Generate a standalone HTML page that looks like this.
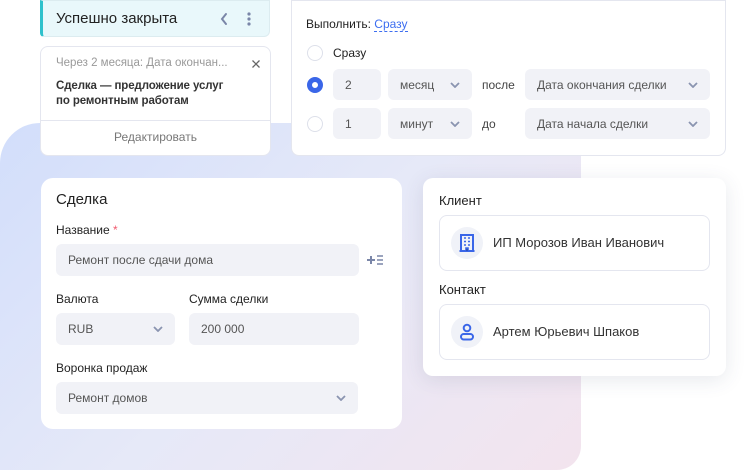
<!DOCTYPE html>
<html><head><meta charset="utf-8"><style>
*{box-sizing:border-box;margin:0;padding:0}
body{width:753px;height:470px;background:#fff;font-family:"Liberation Sans",sans-serif;position:relative;overflow:hidden;color:#222}
.abs{position:absolute}
.bg{left:0;top:123px;width:581px;height:347px;border-radius:40px 0 24px 0;background:linear-gradient(135deg,#d2defb 0%,#e6e9f8 50%,#f3e4ee 100%)}
.card{background:#fff;border:1px solid #e4e6ef;border-radius:8px}
.inp{background:#f1f2f7;border-radius:6px;font-size:12px;color:#555;display:flex;align-items:center;padding-left:12px}
.chev{position:absolute;right:12px;top:50%;margin-top:-3px;width:10px;height:6px}
.lbl{font-size:12px;color:#222}
.radio{width:16px;height:16px;border:1px solid #dde0ea;border-radius:50%;background:#fff}
</style></head><body>
<div class="abs bg"></div>

<div class="abs" style="left:40px;top:0;width:230px;height:37px;background:#e9f8fb;border:1px solid #dcecf0;border-left:3px solid #2fc1cc;border-radius:0 0 6px 4px"></div>
<div class="abs" style="left:56px;top:10px;font-size:15px;color:#222">Успешно закрыта</div>
<svg class="abs" style="left:219px;top:12px" width="10" height="14"><path d="M7 2 L3 7 L7 12" stroke="#7a86a8" stroke-width="2" fill="none" stroke-linecap="round"/></svg>
<svg class="abs" style="left:246px;top:11px" width="6" height="16"><circle cx="3" cy="3" r="1.6" fill="#7a86a8"/><circle cx="3" cy="8" r="1.6" fill="#7a86a8"/><circle cx="3" cy="13" r="1.6" fill="#7a86a8"/></svg>

<div class="abs card" style="left:40px;top:46px;width:231px;height:110px"></div>
<div class="abs" style="left:56px;top:57px;font-size:11.5px;color:#999">Через 2 месяца: Дата окончан...</div>
<svg class="abs" style="left:252px;top:60px" width="8" height="8"><path d="M0.5 0.5L7.5 7.5M7.5 0.5L0.5 7.5" stroke="#666" stroke-width="1.3"/></svg>
<div class="abs" style="left:56px;top:79px;font-size:11.5px;line-height:15px;color:#333;font-weight:bold;letter-spacing:-0.1px">Сделка — предложение услуг<br>по ремонтным работам</div>
<div class="abs" style="left:41px;top:120px;width:229px;height:1px;background:#e4e6ef"></div>
<div class="abs" style="left:41px;top:130px;width:229px;text-align:center;font-size:12px;color:#777">Редактировать</div>

<div class="abs card" style="left:291px;top:0;width:435px;height:156px;border-radius:0 0 8px 8px"></div>
<div class="abs" style="left:306px;top:17px;font-size:12px">Выполнить: <span style="color:#3d6ef0;border-bottom:1px dashed #3d6ef0">Сразу</span></div>
<div class="abs radio" style="left:307px;top:45px"></div>
<div class="abs lbl" style="left:333px;top:46px">Сразу</div>
<div class="abs radio" style="left:307px;top:77px;border:5px solid #3a66e8"></div>
<div class="abs inp" style="left:333px;top:69px;width:48px;height:31px">2</div>
<div class="abs inp" style="left:388px;top:69px;width:84px;height:31px">месяц<svg class="chev" viewBox="0 0 10 6"><path d="M1 1L5 5L9 1" stroke="#8a94b0" stroke-width="1.8" fill="none"/></svg></div>
<div class="abs lbl" style="left:482px;top:78px;color:#444">после</div>
<div class="abs inp" style="left:525px;top:69px;width:185px;height:31px">Дата окончания сделки<svg class="chev" viewBox="0 0 10 6"><path d="M1 1L5 5L9 1" stroke="#8a94b0" stroke-width="1.8" fill="none"/></svg></div>
<div class="abs radio" style="left:307px;top:116px"></div>
<div class="abs inp" style="left:333px;top:108px;width:48px;height:31px">1</div>
<div class="abs inp" style="left:388px;top:108px;width:84px;height:31px">минут<svg class="chev" viewBox="0 0 10 6"><path d="M1 1L5 5L9 1" stroke="#8a94b0" stroke-width="1.8" fill="none"/></svg></div>
<div class="abs lbl" style="left:482px;top:117px;color:#444">до</div>
<div class="abs inp" style="left:525px;top:108px;width:185px;height:31px">Дата начала сделки<svg class="chev" viewBox="0 0 10 6"><path d="M1 1L5 5L9 1" stroke="#8a94b0" stroke-width="1.8" fill="none"/></svg></div>

<div class="abs" style="left:41px;top:178px;width:361px;height:251px;background:#fff;border-radius:12px"></div>
<div class="abs" style="left:56px;top:191px;font-size:15px">Сделка</div>
<div class="abs lbl" style="left:56px;top:223px">Название <span style="color:#f05a6e">*</span></div>
<div class="abs inp" style="left:56px;top:244px;width:303px;height:32px">Ремонт после сдачи дома</div>
<svg class="abs" style="left:366px;top:254px" width="18" height="12"><path d="M1 6H9M5 2V10" stroke="#7a86a8" stroke-width="2"/><path d="M11 2H17M11 6H17M11 10H17" stroke="#7a86a8" stroke-width="1.6"/></svg>
<div class="abs lbl" style="left:56px;top:292px">Валюта</div>
<div class="abs lbl" style="left:189px;top:292px">Сумма сделки</div>
<div class="abs inp" style="left:56px;top:313px;width:119px;height:32px">RUB<svg class="chev" viewBox="0 0 10 6"><path d="M1 1L5 5L9 1" stroke="#8a94b0" stroke-width="1.8" fill="none"/></svg></div>
<div class="abs inp" style="left:189px;top:313px;width:170px;height:32px">200 000</div>
<div class="abs lbl" style="left:56px;top:361px">Воронка продаж</div>
<div class="abs inp" style="left:56px;top:382px;width:302px;height:32px">Ремонт домов<svg class="chev" viewBox="0 0 10 6"><path d="M1 1L5 5L9 1" stroke="#8a94b0" stroke-width="1.8" fill="none"/></svg></div>

<div class="abs" style="left:423px;top:178px;width:303px;height:198px;background:#fff;border-radius:10px;box-shadow:0 4px 20px rgba(60,70,110,.12)"></div>
<div class="abs lbl" style="left:439px;top:193px;font-size:13px">Клиент</div>
<div class="abs card" style="left:439px;top:215px;width:271px;height:56px"></div>
<div class="abs" style="left:451px;top:227px;width:32px;height:32px;border-radius:50%;background:#f0f2f8"></div>
<svg class="abs" style="left:459px;top:234px" width="16" height="18"><path d="M2 17V1H14V17M0.5 17H15.5" stroke="#3a66e8" stroke-width="2" fill="none"/><path d="M5 4H7M9 4H11M5 7.5H7M9 7.5H11M5 11H7M9 11H11M7 17V14H9V17" stroke="#3a66e8" stroke-width="1.6"/></svg>
<div class="abs" style="left:493px;top:235px;font-size:13px;color:#333">ИП Морозов Иван Иванович</div>
<div class="abs lbl" style="left:439px;top:282px;font-size:13px">Контакт</div>
<div class="abs card" style="left:439px;top:304px;width:271px;height:56px"></div>
<div class="abs" style="left:451px;top:316px;width:32px;height:32px;border-radius:50%;background:#f0f2f8"></div>
<svg class="abs" style="left:459px;top:323px" width="16" height="18"><circle cx="8" cy="5" r="3.3" stroke="#3a66e8" stroke-width="2" fill="none"/><rect x="2" y="11" width="12" height="5.5" rx="2.7" stroke="#3a66e8" stroke-width="2" fill="none"/></svg>
<div class="abs" style="left:493px;top:324px;font-size:13px;color:#333">Артем Юрьевич Шпаков</div>
</body></html>
